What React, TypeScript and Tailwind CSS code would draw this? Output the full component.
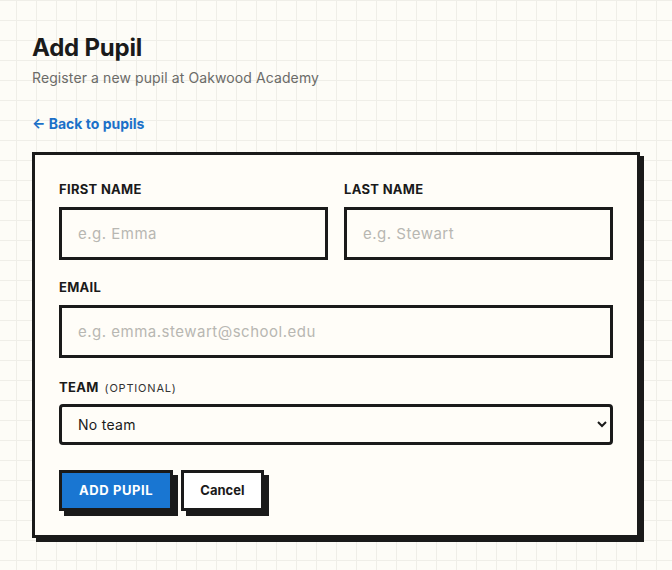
import React from "react";

const font = "font-['Inter','Noto_Sans',sans-serif]";

function Field({
  label,
  hint,
  gap = "mt-2",
  children,
}: {
  label: string;
  hint?: string;
  gap?: string;
  children: React.ReactNode;
}) {
  return (
    <div className="flex flex-col">
      <label className="text-[13px] leading-5 font-bold uppercase tracking-[0.3px] text-[#1a1a1a]">
        {label}
        {hint && <span className="ml-1.5 text-[11px] font-normal tracking-[0.8px] text-[#333]">({hint})</span>}
      </label>
      <div className={gap}>{children}</div>
    </div>
  );
}

const inputCls =
  "w-full h-[53px] border-[3px] border-[#1a1a1a] bg-[#fffdf8] px-4 text-[15px] tracking-[0.5px] text-[#1a1a1a] placeholder:text-[#b8b7b2] outline-none";

export default function App() {
  return (
    <div
      className={`${font} min-h-[570px] bg-[#fdfcf7] bg-[linear-gradient(to_right,#efeee8_1px,transparent_1px),linear-gradient(to_bottom,#efeee8_1px,transparent_1px)] bg-[size:20px_20px] bg-[position:16px_0] px-8 pt-8 pb-8`}
    >
      <h1 className="text-[24px] leading-8 font-bold text-[#1a1a1a] tracking-[-0.2px]">Add Pupil</h1>
      <p className="mt-1 text-[14px] leading-5 tracking-[0.1px] text-[#6b6b68]">Register a new pupil at Oakwood Academy</p>

      <a href="#" className="mt-[26px] block text-[14px] leading-5 font-bold text-[#1b70c8]">
        ← Back to pupils
      </a>

      <div className="mt-[18px] border-[3px] border-[#1a1a1a] bg-[#fffdf8] shadow-[4px_4px_0_#1a1a1a] p-6">
        <div className="grid grid-cols-2 gap-4">
          <Field label="First name">
            <input className={inputCls} placeholder="e.g. Emma" />
          </Field>
          <Field label="Last name">
            <input className={inputCls} placeholder="e.g. Stewart" />
          </Field>
        </div>

        <div className="mt-[17px]">
          <Field label="Email">
            <input className={inputCls} placeholder="e.g. emma.stewart@school.edu" />
          </Field>
        </div>

        <div className="mt-[19px]">
          <Field label="Team" hint="optional" gap="mt-1.5">
            <select className="w-full h-[41px] rounded-[4px] border-[3px] border-[#1a1a1a] bg-[#fffdf8] pl-3 pr-2 text-[14px] tracking-[0.3px] text-[#1a1a1a] outline-none">
              <option>No team</option>
            </select>
          </Field>
        </div>

        <div className="mt-[25px] flex gap-2">
          <button className="h-[41px] px-[17px] border-[3px] border-[#1a1a1a] bg-[#1976d2] text-white text-[13px] font-bold uppercase tracking-[0.6px] shadow-[5px_5px_0_#1a1a1a]">
            Add Pupil
          </button>
          <button className="h-[41px] px-[16px] border-[3px] border-[#1a1a1a] bg-white text-[#1a1a1a] text-[13px] font-bold shadow-[5px_5px_0_#1a1a1a]">
            Cancel
          </button>
        </div>
      </div>
    </div>
  );
}
